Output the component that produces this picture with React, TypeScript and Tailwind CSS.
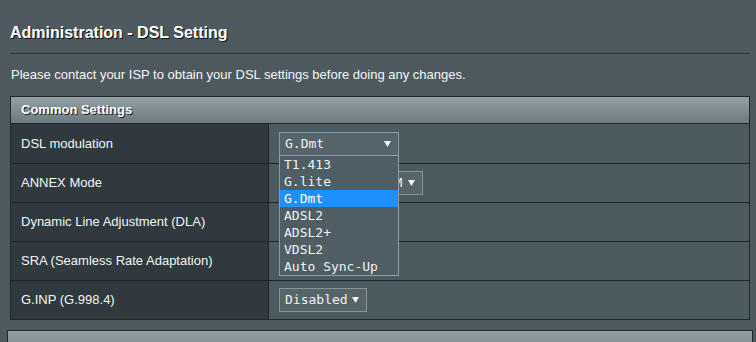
import type { ReactNode } from 'react'

const rows = [
  { label: 'DSL modulation', value: 'G.Dmt', width: 'w-[120px]', focused: true },
  { label: 'ANNEX Mode', value: 'ANNEX A/I/J/L/M', width: 'w-[144px]' },
  { label: 'Dynamic Line Adjustment (DLA)' },
  { label: 'SRA (Seamless Rate Adaptation)' },
  { label: 'G.INP (G.998.4)', value: 'Disabled', width: 'w-[88px]' },
]

const options = ['T1.413', 'G.lite', 'G.Dmt', 'ADSL2', 'ADSL2+', 'VDSL2', 'Auto Sync-Up']

const Arrow = () => (
  <svg width="7" height="6" viewBox="0 0 7 6" className="shrink-0">
    <path d="M0 0 H7 L3.5 6 Z" fill="#f2f5f6" />
  </svg>
)

const Select = ({ value, width, focused }: { value: string; width: string; focused?: boolean }) => (
  <div
    className={`${width} h-[24px] flex items-center justify-between pl-[5px] pr-[7px] bg-[#56656a] border ${
      focused ? 'border-[#7f96b8]' : 'border-[#87959a]'
    } font-['DejaVu_Sans_Mono',monospace] text-[13px] text-[#eef3f4] whitespace-nowrap overflow-hidden`}
  >
    <span>{value}</span>
    <Arrow />
  </div>
)

const Cell = ({ children }: { children: ReactNode }) => (
  <div className="flex items-center h-full">{children}</div>
)

export default function App() {
  return (
    <div className="w-[756px] h-[342px] overflow-hidden bg-[#4e595f] text-white font-['Liberation_Sans',Arial,sans-serif]">
      {/* Page title */}
      <div className="pt-[23px] pl-[10px] text-[16px] leading-[20px] font-bold [text-shadow:1px_1px_0_#111]">
        Administration - DSL Setting
      </div>
      <div className="mt-[10px] ml-[10px] mr-[6px] h-[2px] border-t border-[#2f3639] border-b-[#5d686d]" />

      <div className="mt-[12px] pl-[11px] text-[13px] leading-[16px] text-[#f4f6f7]">
        Please contact your ISP to obtain your DSL settings before doing any changes.
      </div>

      {/* Common settings table */}
      <div className="relative mt-[13px] ml-[10px] w-[740px] border border-[#20282b]">
        <div className="h-[27px] flex items-center pl-[10px] bg-gradient-to-b from-[#939fa4] to-[#6d7b80] text-[13px] font-bold [text-shadow:1px_1px_0_#222] border-b border-[#20282b]">
          Common Settings
        </div>
        {rows.map((row, i) => (
          <div
            key={row.label}
            className={`grid grid-cols-[258px_1fr] h-[39px] ${i > 0 ? 'border-t border-[#1d2528]' : ''}`}
          >
            <div className="flex items-center pl-[10px] bg-[#2f393e] text-[13px] text-[#f4f6f7] border-r border-[#1d2528]">
              {row.label}
            </div>
            <div className="pl-[10px] bg-[#4b5b60]">
              <Cell>{row.value && <Select value={row.value} width={row.width!} focused={row.focused} />}</Cell>
            </div>
          </div>
        ))}

        {/* Open dropdown list */}
        <div className="absolute left-[268px] top-[58px] w-[120px] border border-[#8c9cad] bg-[#4f5e64] font-['DejaVu_Sans_Mono',monospace] text-[13px] text-[#eef3f4]">
          {options.map((o) => (
            <div
              key={o}
              className={`h-[17px] leading-[17px] pl-[4px] ${o === 'G.Dmt' ? 'bg-[#1e90ff] text-white' : ''}`}
            >
              {o}
            </div>
          ))}
        </div>
      </div>

      {/* Next section header */}
      <div className="mt-[10px] ml-[7px] w-[746px] h-[30px] border border-[#20282b] bg-gradient-to-b from-[#939fa4] to-[#6d7b80] pl-[13px] pt-[7px] text-[13px] font-bold [text-shadow:1px_1px_0_#222]">
        ADSL Setting
      </div>
    </div>
  )
}
